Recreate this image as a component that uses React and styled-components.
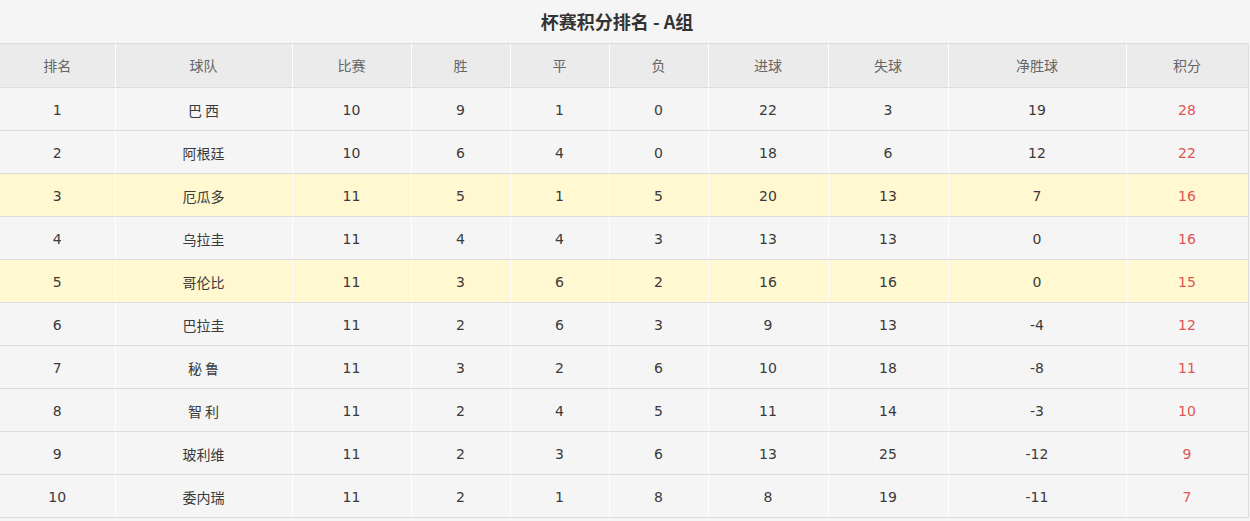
import React from 'react';
import styled, { createGlobalStyle } from 'styled-components';

const GlobalStyle = createGlobalStyle`
    body {
        margin: 0;
        background: #f5f5f5;
        font-family: "DejaVu Sans", "Noto Sans CJK SC", sans-serif;
    }
`;

const Wrapper = styled.div`
    width: 1248px;
    background: #f5f5f5;
`;

const Title = styled.h2`
    margin: 0;
    height: 43px;
    line-height: 43px;
    text-align: center;
    font-size: 18px;
    font-weight: bold;
    color: #333;
    font-family: "Noto Sans CJK SC", "DejaVu Sans", sans-serif;
    padding-right: 14px;
`;

const Table = styled.table`
    width: 1248px;
    border-collapse: collapse;
    table-layout: fixed;
    border-right: 1px solid #dedede;
`;

const HeadCell = styled.th`
    height: 41px;
    padding: 0 0 2px;
    background: #ebebeb;
    color: #666;
    font-weight: normal;
    font-size: 14px;
    font-family: "Noto Sans CJK SC", sans-serif;
    border-top: 1px solid #dedede;
    border-bottom: 1px solid #dedede;
    border-left: 1px solid #fff;
    &:first-child {
        border-left: none;
    }
`;

const Row = styled.tr`
    background: ${p => (p.$highlight ? '#fff8d0' : '#f5f5f5')};
`;

const Cell = styled.td`
    height: 41px;
    padding: 1px 0 0;
    text-align: center;
    font-size: 14px;
    color: ${p => (p.$points ? '#e05656' : '#3a3a3a')};
    border-bottom: 1px solid #dedede;
    border-left: 1px solid #fff;
    &:first-child {
        border-left: none;
    }
`;

const TeamName = styled.span`
    font-family: "Noto Sans CJK SC", sans-serif;
`;

const columns = [
    { label: '排名', width: 115 },
    { label: '球队', width: 177 },
    { label: '比赛', width: 119 },
    { label: '胜', width: 99 },
    { label: '平', width: 99 },
    { label: '负', width: 99 },
    { label: '进球', width: 120 },
    { label: '失球', width: 120 },
    { label: '净胜球', width: 178 },
    { label: '积分', width: 122 },
];

const teams = [
    [1, '巴 西', 10, 9, 1, 0, 22, 3, 19, 28],
    [2, '阿根廷', 10, 6, 4, 0, 18, 6, 12, 22],
    [3, '厄瓜多', 11, 5, 1, 5, 20, 13, 7, 16],
    [4, '乌拉圭', 11, 4, 4, 3, 13, 13, 0, 16],
    [5, '哥伦比', 11, 3, 6, 2, 16, 16, 0, 15],
    [6, '巴拉圭', 11, 2, 6, 3, 9, 13, -4, 12],
    [7, '秘 鲁', 11, 3, 2, 6, 10, 18, -8, 11],
    [8, '智 利', 11, 2, 4, 5, 11, 14, -3, 10],
    [9, '玻利维', 11, 2, 3, 6, 13, 25, -12, 9],
    [10, '委内瑞', 11, 2, 1, 8, 8, 19, -11, 7],
];

const highlighted = [3, 5];

export default function App() {
    return (
        <Wrapper>
            <GlobalStyle />
            <Title>杯赛积分排名 - A组</Title>
            <Table>
                <colgroup>
                    {columns.map(c => (
                        <col key={c.label} style={{ width: c.width }} />
                    ))}
                </colgroup>
                <thead>
                    <tr>
                        {columns.map(c => (
                            <HeadCell key={c.label}>{c.label}</HeadCell>
                        ))}
                    </tr>
                </thead>
                <tbody>
                    {teams.map(team => (
                        <Row key={team[0]} $highlight={highlighted.includes(team[0])}>
                            {team.map((value, i) => (
                                <Cell key={i} $points={i === team.length - 1}>
                                    {i === 1 ? <TeamName>{value}</TeamName> : value}
                                </Cell>
                            ))}
                        </Row>
                    ))}
                </tbody>
            </Table>
        </Wrapper>
    );
}
